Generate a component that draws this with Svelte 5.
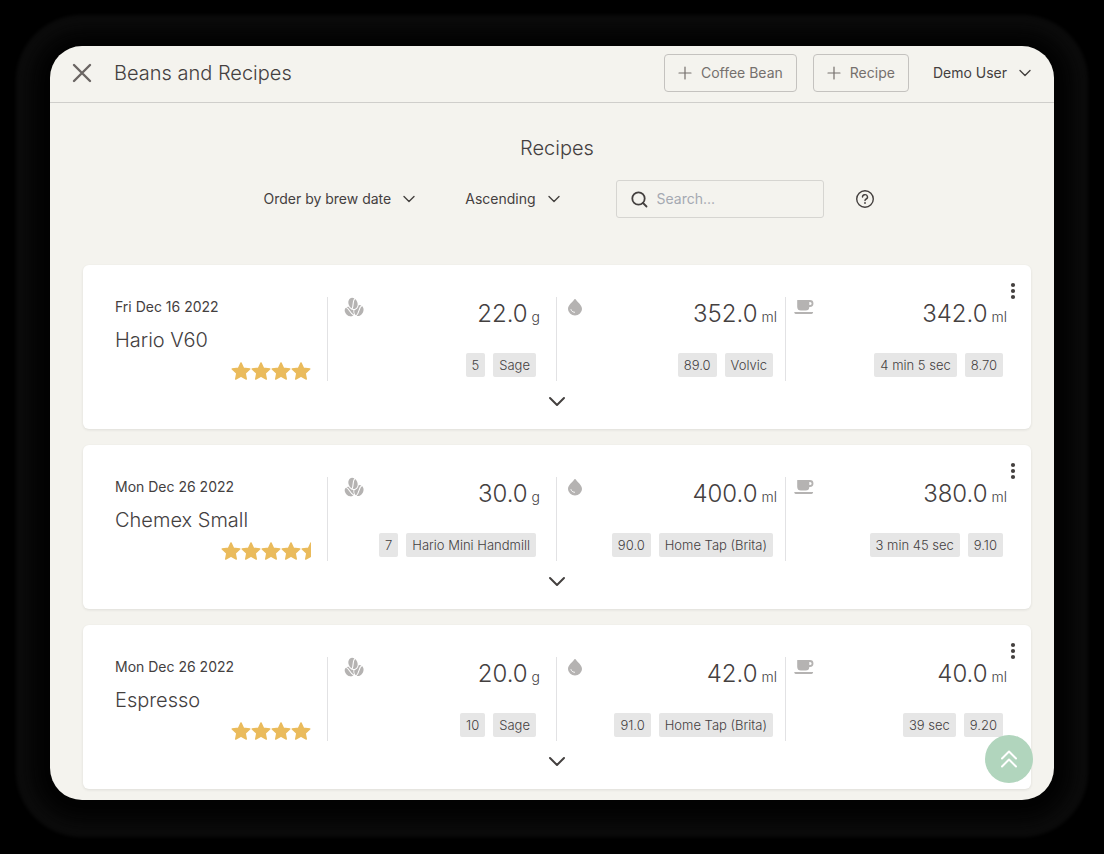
<script>
  let orderBy = $state('Order by brew date');
  let direction = $state('Ascending');
  let query = $state('');

  const recipes = [
    {
      date: 'Fri Dec 16 2022',
      name: 'Hario V60',
      rating: 4,
      parts: [
        { icon: 'beans', value: '22.0', unit: 'g', tags: ['5', 'Sage'] },
        { icon: 'drop', value: '352.0', unit: 'ml', tags: ['89.0', 'Volvic'] },
        { icon: 'cup', value: '342.0', unit: 'ml', tags: ['4 min 5 sec', '8.70'] }
      ]
    },
    {
      date: 'Mon Dec 26 2022',
      name: 'Chemex Small',
      rating: 4.5,
      parts: [
        { icon: 'beans', value: '30.0', unit: 'g', tags: ['7', 'Hario Mini Handmill'] },
        { icon: 'drop', value: '400.0', unit: 'ml', tags: ['90.0', 'Home Tap (Brita)'] },
        { icon: 'cup', value: '380.0', unit: 'ml', tags: ['3 min 45 sec', '9.10'] }
      ]
    },
    {
      date: 'Mon Dec 26 2022',
      name: 'Espresso',
      rating: 4,
      parts: [
        { icon: 'beans', value: '20.0', unit: 'g', tags: ['10', 'Sage'] },
        { icon: 'drop', value: '42.0', unit: 'ml', tags: ['91.0', 'Home Tap (Brita)'] },
        { icon: 'cup', value: '40.0', unit: 'ml', tags: ['39 sec', '9.20'] }
      ]
    }
  ];
</script>

{#snippet chevron()}
  <svg class="chevron" viewBox="0 0 12 8" aria-hidden="true"><path d="M1 1.5 6 6.5 11 1.5" /></svg>
{/snippet}

{#snippet plus()}
  <svg class="plus" viewBox="0 0 14 14" aria-hidden="true"><path d="M7 1v12M1 7h12" /></svg>
{/snippet}

{#snippet bean(transform, slit)}
  <g {transform}>
    <ellipse rx="4.2" ry="5.4" />
    <path class="slit" d={slit} />
  </g>
{/snippet}

{#snippet partIcon(name)}
  <svg class="part-icon" viewBox="0 0 20 20" aria-hidden="true">
    {#if name === 'beans'}
      {@render bean('translate(5.6 14.6) rotate(-48)', 'M.6-6C2.6-2-1.6 1.2.2 6')}
      <ellipse class="gap" rx="5.2" ry="6.4" transform="translate(14.8 13.4) rotate(24)" />
      {@render bean('translate(14.9 13.6) rotate(24) scale(1.05)', 'M.8-6C-2 -2 2 1.200-.6 6')}
      <ellipse class="gap" rx="5.4" ry="6.6" transform="translate(9 6.600) rotate(-22)" />
      {@render bean('translate(9 6.4) rotate(-22) scale(1.06)', 'M4.200-3.800C.2-3.200.6 1.600-3 4.800')}
    {:else if name === 'drop'}
      <path d="M10 2c.5 0 .8.3 1 .7 1.500 2.600 6 5.300 6 9.300a7 6.500 0 0 1-14 0c0-4 4.500-6.700 6-9.300.2-.4.500-.7 1-.7Z" />
      <path class="shine" d="M6 12.600c.4 1.600 1.700 2.500 3.500 2.700" />
    {:else}
      <path
        fill-rule="evenodd"
        d="M3.500 3H16a3.400 3.400 0 0 1 0 6.900h-.7A3.700 3.700 0 0 1 11.700 13.500H6.900A3.700 3.700 0 0 1 3.200 10V3.400c0-.2.1-.4.3-.4ZM15.300 4.900v3.200h.7a1.600 1.600 0 0 0 0-3.200ZM.7 15h18c.5 0 .5.500.2.900-.4.6-.8 1-1.500 1H1.900c-.700 0-1.200-.5-1.500-1-.2-.4-.1-.9.3-.9Z"
      />
    {/if}
  </svg>
{/snippet}

<div class="window">
  <header>
    <button class="close" aria-label="Close">
      <svg viewBox="0 0 20 20" aria-hidden="true"><path d="M2 2l16 16M18 2l-16 16" /></svg>
    </button>
    <h1>Beans and Recipes</h1>
    <button class="outlined">{@render plus()}Coffee Bean</button>
    <button class="outlined">{@render plus()}Recipe</button>
    <button class="user">Demo User{@render chevron()}</button>
  </header>

  <main>
    <h2>Recipes</h2>

    <div class="filters">
      <label class="picker">
        <select aria-label="Order recipes" bind:value={orderBy}>
          <option>Order by brew date</option>
        </select>
        {@render chevron()}
      </label>
      <label class="picker">
        <select aria-label="Sort direction" bind:value={direction}>
          <option>Ascending</option>
          <option>Descending</option>
        </select>
        {@render chevron()}
      </label>
      <label class="search">
        <svg viewBox="0 0 18 18" aria-hidden="true">
          <circle cx="8.500" cy="8.500" r="6.200" />
          <path d="M13 13 16.500 16.500" />
        </svg>
        <input type="search" aria-label="Search recipes" placeholder="Search..." bind:value={query} />
      </label>
      <button class="help" aria-label="Help">
        <svg viewBox="0 0 20 20" aria-hidden="true">
          <circle cx="10" cy="10" r="8.300" />
          <path d="M7.500 8a2.500 2.300 0 1 1 3.700 2c-.8.4-1.200.8-1.200 1.600" />
          <circle class="dot" cx="10" cy="14" r=".9" />
        </svg>
      </button>
    </div>

    <div class="cards">
      {#each recipes as recipe}
        <article>
          <button class="more" aria-label="More actions">
            <svg viewBox="0 0 6 18" aria-hidden="true">
              <circle cx="3" cy="3" r="2.100" /><circle cx="3" cy="9" r="2.100" /><circle cx="3" cy="15" r="2.100" />
            </svg>
          </button>
          <div class="columns">
            <div class="summary">
              <time>{recipe.date}</time>
              <h3>{recipe.name}</h3>
              <div class="stars" role="img" aria-label="{recipe.rating} stars">
                {#each { length: Math.ceil(recipe.rating) } as _, i}
                  <svg class:half={recipe.rating - i < 1} viewBox={recipe.rating - i < 1 ? '0 0 10 20' : '0 0 20 20'} aria-hidden="true">
                    <path d="M10 1.900 12.500 7.200 18.800 8 14.200 12.200 15.300 18.100 10 15.200 4.700 18.100 5.800 12.200 1.200 8 7.500 7.200Z" />
                  </svg>
                {/each}
              </div>
            </div>
            {#each recipe.parts as part}
              <div class="part {part.icon}">
                <div class="amount">
                  {@render partIcon(part.icon)}
                  <span><span class="value">{part.value}</span> {part.unit}</span>
                </div>
                <div class="tags">
                  {#each part.tags as tag}<span>{tag}</span>{/each}
                </div>
              </div>
            {/each}
          </div>
          <button class="expand" aria-label="Show details">
            <svg viewBox="0 0 18 12" aria-hidden="true"><path d="M2 2 9 9 16 2" /></svg>
          </button>
        </article>
      {/each}
    </div>
  </main>

  <button class="to-top" aria-label="Back to top">
    <svg viewBox="0 0 18 20" aria-hidden="true"><path d="M2 9.500 9 2.500 16 9.500M2 17.500 9 10.500 16 17.500" /></svg>
  </button>
</div>

<style>
  :global(body) {
    background: #000;
  }

  :global(#app) {
    box-sizing: border-box;
    min-height: 100vh;
    padding: 46px 50px 54px;
  }

  .window {
    position: relative;
    color: #44403f;
    background: #f4f3ee;
    border-radius: 32px;
    box-shadow:
      0 3px 20px 20px #030303,
      0 3px 4px 34px #0d0d0d;
    font: 400 14px/24px Inter, sans-serif;
  }

  h1,
  h2,
  h3 {
    margin: 0;
    font-size: 20px;
    font-weight: 300;
    line-height: 32px;
  }

  button,
  select,
  input {
    margin: 0;
    padding: 0;
    color: inherit;
    font: inherit;
    background: none;
    border: 0;
  }

  button,
  select {
    cursor: pointer;
  }

  svg {
    display: block;
    flex: none;
    fill: none;
    stroke: currentColor;
    stroke-linecap: round;
    stroke-linejoin: round;
  }

  .chevron {
    width: 12px;
    height: 8px;
    stroke-width: 1.4;
  }

  header {
    display: flex;
    align-items: center;
    gap: 16px;
    box-sizing: border-box;
    height: 57px;
    padding: 0 23px 2px 22px;
    border-bottom: 1px solid #cfcecb;
  }

  header h1 {
    flex: 1;
    padding-left: 6px;
  }

  .close svg {
    width: 20px;
    height: 20px;
    color: #6a6563;
    stroke-width: 2.4;
  }

  .outlined,
  .user {
    display: flex;
    align-items: center;
  }

  .outlined {
    gap: 9px;
    height: 38px;
    padding: 0 13px;
    color: #75706d;
    border: 1px solid #c4c2bf;
    border-radius: 4px;
  }

  .plus {
    width: 14px;
    height: 14px;
    stroke-width: 1.2;
  }

  .user {
    gap: 12px;
    padding-left: 8px;
  }

  main {
    padding: 29px 23px 11px 33px;
  }

  main h2 {
    text-align: center;
  }

  .filters {
    display: flex;
    align-items: center;
    justify-content: center;
    margin: 16px 0 47px;
    padding-left: 24px;
  }

  .picker {
    display: flex;
    align-items: center;
    gap: 12px;
    margin-right: 50px;
  }

  .picker + .search {
    margin-left: 6px;
  }

  select {
    appearance: none;
    field-sizing: content;
  }

  .search {
    display: flex;
    align-items: center;
    gap: 9px;
    box-sizing: border-box;
    width: 208px;
    height: 38px;
    padding: 0 13px;
    border: 1px solid #d6d5d1;
    border-radius: 3px;
  }

  .search svg {
    width: 18px;
    height: 18px;
    stroke-width: 1.8;
  }

  input {
    min-width: 0;
    flex: 1;
    outline: 0;
  }

  input::placeholder {
    color: #a5a9b2;
    opacity: 1;
  }

  .help {
    margin-left: 31px;
  }

  .help svg {
    width: 20px;
    height: 20px;
    stroke-width: 1.4;
  }

  .help .dot {
    fill: currentColor;
    stroke: none;
  }

  .cards {
    display: grid;
    gap: 16px;
  }

  article {
    position: relative;
    padding: 32px 16px 15px;
    background: #fff;
    border-radius: 6px;
    box-shadow: 0 1px 3px rgb(0 0 0 / 9%);
  }

  .columns {
    display: grid;
    grid-template-columns: repeat(4, minmax(0, 1fr));
  }

  .columns > * {
    box-sizing: border-box;
    height: 84px;
    border-right: 1px solid #e2e2e4;
  }

  .columns > :last-child {
    border-right: 0;
  }

  .summary {
    padding: 0 16px;
  }

  time {
    display: block;
    line-height: 20px;
  }

  h3 {
    padding: 7px 0 5px;
  }

  .stars {
    display: flex;
    justify-content: flex-end;
  }

  .stars svg {
    width: 20px;
    height: 20px;
    fill: #eabb5c;
    stroke: #eabb5c;
    stroke-width: 1.4;
  }

  .stars .half {
    width: 10px;
  }

  .part {
    display: flex;
    flex-direction: column;
    justify-content: space-between;
    padding: 0 8px 4px;
  }

  .beans {
    padding-left: 16px;
    padding-right: 16px;
  }

  .amount {
    display: flex;
    justify-content: space-between;
    font-weight: 300;
    line-height: 34px;
  }

  .value {
    font-size: 24px;
  }

  .part-icon {
    width: 20px;
    height: 20px;
    fill: #b5b3b2;
    stroke: none;
  }

  .slit,
  .shine {
    fill: none;
    stroke: #fff;
    stroke-width: 1;
  }

  .gap {
    fill: #fff;
  }

  .tags {
    display: flex;
    justify-content: flex-end;
    gap: 8px;
    padding-right: 4px;
  }

  .tags span {
    padding: 0 6px;
    font-size: 13px;
    font-weight: 300;
    white-space: nowrap;
    background: #e6e6e6;
    border-radius: 2px;
  }

  .expand {
    display: block;
    margin: 9px auto 0;
    padding: 6px;
  }

  .expand svg {
    width: 18px;
    height: 12px;
    stroke-width: 2;
  }

  .more {
    position: absolute;
    top: 17px;
    right: 15px;
  }

  .more svg {
    width: 6px;
    height: 18px;
    fill: currentColor;
    stroke: none;
  }

  .to-top {
    position: absolute;
    right: 21px;
    bottom: 17px;
    display: grid;
    place-items: center;
    width: 48px;
    height: 48px;
    color: #fff;
    background: #b1d5bd;
    border-radius: 50%;
  }

  .to-top svg {
    width: 18px;
    height: 20px;
    stroke-width: 2;
  }
</style>
